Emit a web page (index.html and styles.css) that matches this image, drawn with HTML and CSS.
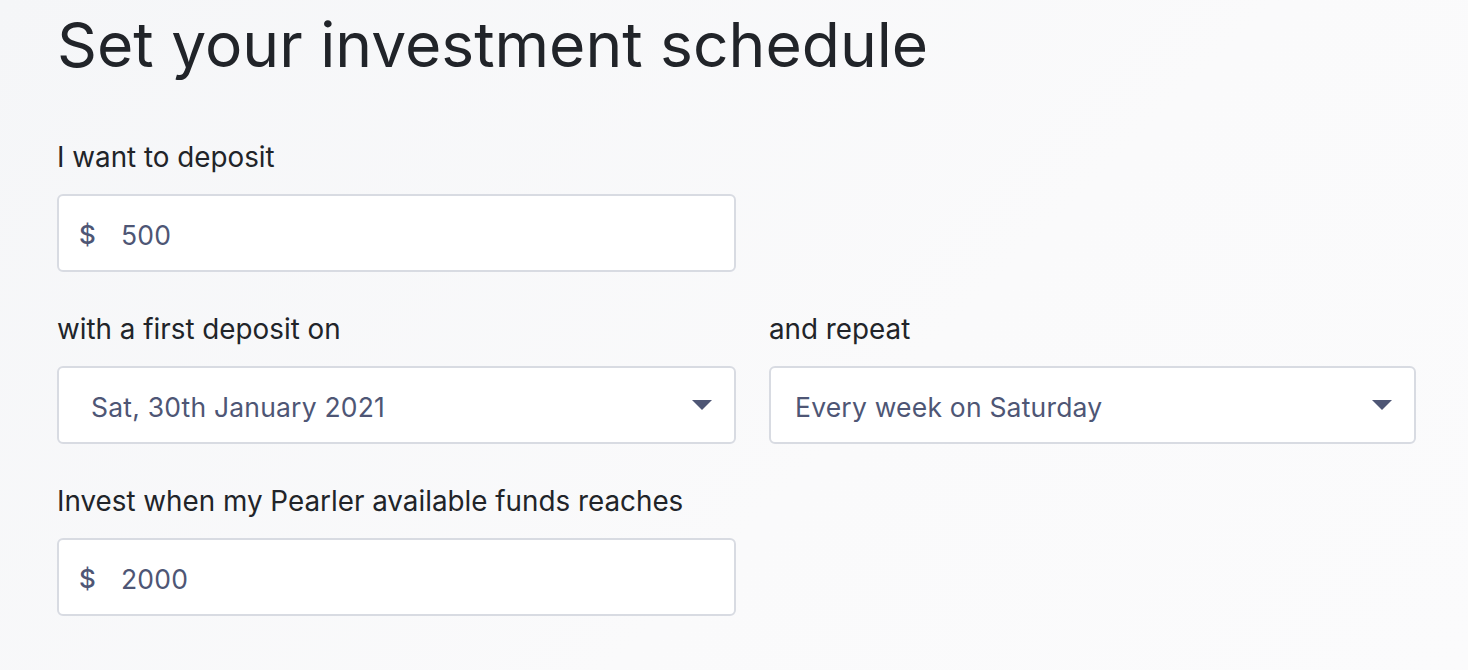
FILE: index.html
```html
<!DOCTYPE html>
<html lang="en">
<head>
<meta charset="utf-8">
<title>Set your investment schedule</title>
<link rel="stylesheet" href="styles.css">
</head>
<body>
<main class="page">
  <h1 class="title">Set your investment schedule</h1>
  <div class="form">
    <div class="field field-deposit">
      <label class="label">I want to deposit</label>
      <div class="box">
        <span class="currency">$</span>
        <span class="value">500</span>
      </div>
    </div>
    <div class="field field-date">
      <label class="label">with a first deposit on</label>
      <div class="box select select-date">
        <span class="value">Sat, 30th January 2021</span>
        <span class="caret"></span>
      </div>
    </div>
    <div class="field field-repeat">
      <label class="label">and repeat</label>
      <div class="box select select-repeat">
        <span class="value">Every week on Saturday</span>
        <span class="caret"></span>
      </div>
    </div>
    <div class="field field-threshold">
      <label class="label">Invest when my Pearler available funds reaches</label>
      <div class="box">
        <span class="currency">$</span>
        <span class="value">2000</span>
      </div>
    </div>
  </div>
</main>
</body>
</html>
```
FILE: styles.css
```css
html, body {
  margin: 0;
  height: 100%;
}
body {
  background: linear-gradient(135deg, #f5f6f8 0%, #fafafb 60%, #fbfbfc 100%);
  font-family: Inter, "Noto Sans", sans-serif;
  color: #212429;
}
.page {
  padding: 9px 52px 0 57px;
}
.title {
  margin: 0;
  font-size: 62.3px;
  font-weight: 400;
  line-height: 72px;
  color: #212429;
}
.form {
  display: grid;
  grid-template-columns: 679px 647px;
  column-gap: 33px;
  margin-top: 61px;
}
.field-deposit { grid-column: 1; grid-row: 1; }
.field-date { grid-column: 1; grid-row: 2; }
.field-repeat { grid-column: 2; grid-row: 2; }
.field-threshold { grid-column: 1; grid-row: 3; }
.label {
  display: block;
  font-size: 27.8px;
  line-height: 30px;
  margin-bottom: 22px;
  color: #212429;
}
.box {
  box-sizing: border-box;
  height: 78px;
  background: #fff;
  border: 2px solid #d8dbe2;
  border-radius: 6px;
  display: flex;
  align-items: center;
  padding: 3px 20px 0;
  margin-bottom: 42px;
  font-size: 26.5px;
  color: #4e5675;
}
.value {
  letter-spacing: 0.2px;
}
.currency {
  width: 42px;
  font-size: 26px;
  font-weight: 500;
  color: #4e5675;
}
.select {
  justify-content: space-between;
  padding-right: 22px;
}
.select-date {
  padding-left: 32px;
}
.select-repeat {
  padding-left: 24px;
}
.caret {
  width: 0;
  height: 0;
  margin-top: -3px;
  border-left: 10px solid transparent;
  border-right: 10px solid transparent;
  border-top: 10px solid #4e5675;
}
```
